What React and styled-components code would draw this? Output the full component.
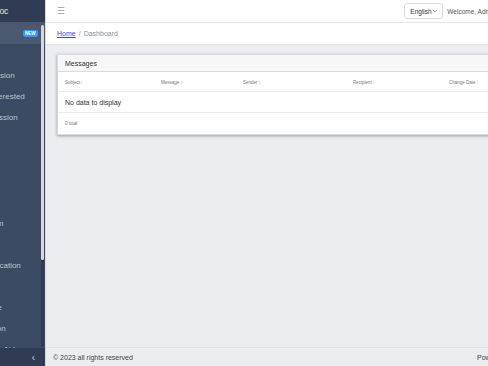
import styled, { createGlobalStyle } from "styled-components";

const Global = createGlobalStyle`
  html, body { margin: 0; padding: 0; overflow: hidden; }
  body { font-family: "Liberation Sans", Arial, sans-serif; background: #ebedef; }
`;

const Shell = styled.div`
  display: flex;
  width: 488px;
  height: 366px;
  overflow: hidden;
`;

const Sidebar = styled.aside`
  flex: 0 0 45px;
  display: flex;
  flex-direction: column;
  background: #3c4b64;
  overflow: hidden;
  position: relative;
`;

/* the sidebar is scrolled mostly out of view: only its right edge shows */
const SideInner = styled.div`
  width: 103px;
  margin-left: -57px;
  display: flex;
  flex-direction: column;
  flex: 1;
  min-height: 0;
`;

const Brand = styled.div`
  height: 22px;
  flex: 0 0 22px;
  background: #303c54;
  color: #e6e9ee;
  font-size: 8.5px;
  display: flex;
  align-items: center;
  padding-left: 12px;
  white-space: nowrap;
`;

const NavList = styled.div`
  flex: 1;
  min-height: 0;
  overflow: hidden;
  display: flex;
  flex-direction: column;
`;

const NavItem = styled.div`
  flex: 0 0 ${({ h }) => h || 21}px;
  display: flex;
  align-items: center;
  justify-content: space-between;
  padding: 0 8px 0 12px;
  font-size: 8px;
  color: #bcc3ce;
  background: ${({ active }) => (active ? "#4a5870" : "transparent")};
  white-space: nowrap;
`;

const Badge = styled.span`
  background: #3399ff;
  color: #fff;
  font-size: 4.5px;
  font-weight: 700;
  border-radius: 2px;
  padding: 1px 2.5px;
`;

const Scroll = styled.div`
  position: absolute;
  right: 1px;
  top: 25px;
  width: 3px;
  height: 322px;
  background: #2f3b50;
  border-radius: 2px;
  &::before {
    content: "";
    position: absolute;
    left: 0;
    top: 0;
    width: 3px;
    height: 235px;
    border-radius: 2px;
    background: #d5d9df;
  }
`;

const Toggler = styled.div`
  flex: 0 0 18px;
  background: #303c54;
  color: #c8ccd3;
  font-size: 10px;
  display: flex;
  align-items: center;
  justify-content: flex-end;
  padding-right: 11px;
`;

const Main = styled.main`
  flex: 1;
  min-width: 0;
  display: flex;
  flex-direction: column;
  border-left: 1px solid #d8dbe0;
`;

const TopBar = styled.header`
  height: 22px;
  background: #fff;
  border-bottom: 1px solid #e4e7eb;
  display: flex;
  align-items: center;
  padding-left: 11px;
  white-space: nowrap;
`;

const Burger = styled.span`
  color: #9aa0a8;
  font-size: 9px;
`;

const Right = styled.div`
  margin-left: auto;
  display: flex;
  align-items: center;
  gap: 4px;
  margin-right: -8px;
`;

const Lang = styled.div`
  height: 16px;
  width: 39px;
  border: 1px solid #d8dbe0;
  border-radius: 3px;
  display: flex;
  align-items: center;
  justify-content: space-between;
  padding: 0 4px 0 5px;
  box-sizing: border-box;
  font-size: 6.5px;
  color: #333;
`;

const Welcome = styled.span`
  font-size: 6.5px;
  color: #555;
`;

const Crumbs = styled.nav`
  height: 21px;
  background: #fff;
  border-bottom: 1px solid #e0e3e7;
  display: flex;
  align-items: center;
  padding-left: 11px;
  font-size: 7px;
  color: #8a9099;
  gap: 3px;
`;

const Link = styled.a`
  color: #4a3fe0;
  text-decoration: underline;
`;

const Body = styled.div`
  flex: 1;
  padding: 9px 0 0 11px;
`;

const Card = styled.section`
  width: 460px;
  background: #fff;
  border: 1px solid #d8dbe0;
  box-shadow: 0 1px 3px rgba(0, 0, 0, 0.35);
`;

const CardHead = styled.div`
  height: 16px;
  background: #f7f7f8;
  border-bottom: 1px solid #d8dbe0;
  display: flex;
  align-items: center;
  padding-left: 7px;
  font-size: 7px;
  color: #333;
`;

const HeadRow = styled.div`
  display: grid;
  grid-template-columns: 96px 82px 110px 96px 1fr;
  align-items: center;
  height: 19px;
  border-bottom: 1px solid #ebedef;
  padding-left: 7px;
`;

const Th = styled.span`
  font-size: 4.5px;
  color: #777;
`;

const Empty = styled.div`
  height: 20px;
  border-bottom: 1px solid #ebedef;
  display: flex;
  align-items: center;
  padding-left: 7px;
  font-size: 7px;
  color: #333;
`;

const Total = styled.div`
  height: 21px;
  display: flex;
  align-items: center;
  padding-left: 7px;
  font-size: 4.5px;
  color: #777;
`;

const Footer = styled.footer`
  height: 18px;
  background: #ebedef;
  border-top: 1px solid #e0e3e7;
  display: flex;
  align-items: center;
  justify-content: space-between;
  padding-left: 7px;
  font-size: 7px;
  color: #444;
  white-space: nowrap;
`;

const FootRight = styled.span`
  margin-right: -26px;
`;

const cols = ["Subject", "Message", "Sender", "Recipient", "Change Date"];

const nav = [
  ["", 21],
  ["New Submission", 21],
  ["All Users Interested", 21],
  ["Users Permission", 21],
  ["", 22],
  ["", 21],
  ["", 21],
  ["", 21],
  ["Contact Form", 21],
  ["", 21],
  ["Submit Application", 21],
  ["", 21],
  ["Fx Exchange", 21],
  ["Administration", 21],
  ["Home Health Aide", 21],
];

function Chevron() {
  return (
    <svg width="6" height="4" viewBox="0 0 6 4">
      <path d="M0.8 0.8 L3 3 L5.2 0.8" fill="none" stroke="#8a9099" strokeWidth="0.8" />
    </svg>
  );
}

export default function App() {
  return (
    <>
      <Global />
      <Shell>
        <Sidebar>
          <SideInner>
            <Brand>Platforms Doc</Brand>
            <NavList>
              <NavItem active h={22}>
                <span>Home</span>
                <Badge>NEW</Badge>
              </NavItem>
              {nav.map(([label, h], i) => (
                <NavItem key={i} h={h}>
                  {label}
                </NavItem>
              ))}
            </NavList>
            <Toggler>‹</Toggler>
          </SideInner>
          <Scroll />
        </Sidebar>
        <Main>
          <TopBar>
            <Burger>☰</Burger>
            <Right>
              <Lang>
                English <Chevron />
              </Lang>
              <Welcome>Welcome, Admin</Welcome>
            </Right>
          </TopBar>
          <Crumbs>
            <Link>Home</Link>
            <span>/</span>
            <span>Dashboard</span>
          </Crumbs>
          <Body>
            <Card>
              <CardHead>Messages</CardHead>
              <HeadRow>
                {cols.map((c) => (
                  <Th key={c}>{c} ⁝</Th>
                ))}
              </HeadRow>
              <Empty>No data to display</Empty>
              <Total>0 total</Total>
            </Card>
          </Body>
          <Footer>
            <span>© 2023 all rights reserved</span>
            <FootRight>Powered by</FootRight>
          </Footer>
        </Main>
      </Shell>
    </>
  );
}
